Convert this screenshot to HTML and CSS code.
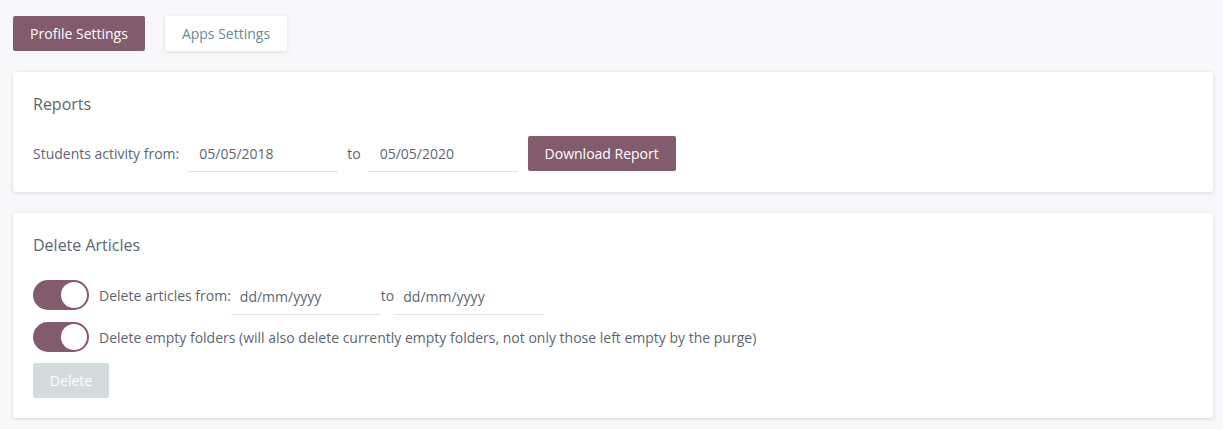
FILE: index.html
```html
<!DOCTYPE html>
<html>
<head>
<meta charset="utf-8">
<link rel="stylesheet" href="styles.css">
</head>
<body>
<div class="page">
  <div class="tabs">
    <button class="tab tab-active">Profile Settings</button>
    <button class="tab tab-plain">Apps Settings</button>
  </div>
  <section class="card card-reports">
    <h2 class="card-title">Reports</h2>
    <div class="row">
      <span class="label">Students activity from:</span>
      <span class="date-input">05/05/2018</span>
      <span class="to">to</span>
      <span class="date-input">05/05/2020</span>
      <button class="btn btn-primary">Download Report</button>
    </div>
  </section>
  <section class="card card-delete">
    <h2 class="card-title">Delete Articles</h2>
    <div class="toggle-row first">
      <span class="toggle"><span class="knob"></span></span>
      <span class="label">Delete articles from:</span>
      <span class="date-input">dd/mm/yyyy</span>
      <span class="to">to</span>
      <span class="date-input">dd/mm/yyyy</span>
    </div>
    <div class="toggle-row second">
      <span class="toggle"><span class="knob"></span></span>
      <span class="label">Delete empty folders (will also delete currently empty folders, not only those left empty by the purge)</span>
    </div>
    <button class="btn btn-disabled">Delete</button>
  </section>
</div>
</body>
</html>
```
FILE: styles.css
```css
* { box-sizing: border-box; }
html, body { margin: 0; padding: 0; }
body {
  background: #f8f8fa;
  font-family: "Open Sans", "Noto Sans", sans-serif;
  color: #5d6670;
  font-size: 14px;
}
.page {
  padding: 16px 10px 0 13px;
}
.tabs {
  display: flex;
  gap: 20px;
  margin-bottom: 21px;
}
.tab {
  height: 35px;
  border: none;
  border-radius: 2px;
  font-family: inherit;
  font-size: 14px;
  padding: 0;
  white-space: nowrap;
  cursor: pointer;
}
.tab-active {
  background: #825c6c;
  color: #fff;
  width: 132px;
}
.tab-plain {
  background: #fff;
  color: #6b8a8c;
  width: 122px;
  box-shadow: 0 1px 4px rgba(0,0,0,0.12);
}
.card {
  background: #fff;
  border-radius: 3px;
  box-shadow: 0 1px 4px rgba(0,0,0,0.14);
  padding: 20px;
  width: 1200px;
  margin-bottom: 21px;
}
.card-reports { padding-bottom: 21px; }
.card-title {
  margin: 0;
  font-weight: 400;
  font-size: 16px;
  line-height: 24px;
  color: #5d6670;
}
.card-reports .card-title { margin-bottom: 20px; }
.card-delete .card-title { margin-bottom: 23px; }
.row {
  display: flex;
  align-items: center;
  height: 35px;
}
.label { white-space: nowrap; }
.date-input {
  display: flex;
  align-items: center;
  width: 151px;
  height: 36px;
  margin-top: 1px;
  padding-left: 12px;
  border-bottom: 1px solid #dde5e7;
  color: #5d6670;
}
.row .label { margin-right: 8px; }
.row .to { margin: 0 7px 0 9px; }
.row .date-input + .btn { margin-left: 10px; }
.row .to + .date-input { width: 150px; }
.btn {
  height: 35px;
  border: none;
  border-radius: 2px;
  font-family: inherit;
  font-size: 14px;
  padding: 0;
  white-space: nowrap;
}
.btn-primary {
  background: #825c6c;
  color: #fff;
  width: 148px;
}
.btn-disabled {
  background: #d3dcdd;
  color: #fff;
  width: 76px;
  margin-top: 11px;
}
.toggle-row {
  display: flex;
  align-items: center;
  height: 30px;
}
.toggle-row.second { margin-top: 12px; }
.toggle {
  width: 56px;
  height: 30px;
  border-radius: 15px;
  background: #825c6c;
  position: relative;
  flex: none;
  margin-right: 10px;
}
.knob {
  position: absolute;
  right: 2px;
  top: 2px;
  width: 26px;
  height: 26px;
  border-radius: 50%;
  background: #fff;
}
.toggle-row .date-input { width: 150px; padding-left: 9px; margin-top: 3px; }
.toggle-row .to { margin: 0; }
```
